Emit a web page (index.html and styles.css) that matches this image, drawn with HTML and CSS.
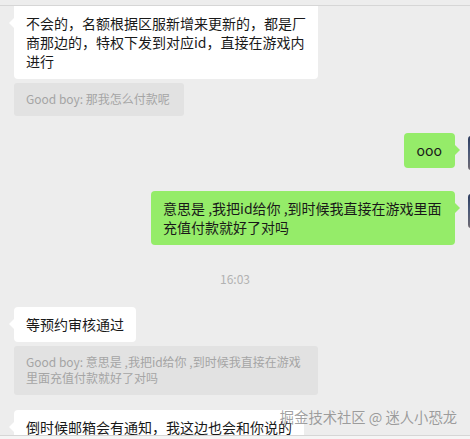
FILE: index.html
```html
<!DOCTYPE html>
<html lang="zh">
<head>
<meta charset="utf-8">
<title>Chat</title>
<link rel="stylesheet" href="styles.css">
</head>
<body>
<div class="app">
  <div class="topbar"></div>
  <div class="chat">
    <div class="row left first">
      <div class="bubble white">不会的，名额根据区服新增来更新的，都是厂商那边的，特权下发到对应id，直接在游戏内进行</div>
    </div>
    <div class="row quote-row">
      <div class="quote">Good boy: 那我怎么付款呢</div>
    </div>
    <div class="row right r1">
      <div class="bubble green">ooo</div>
      <div class="avatar"></div>
    </div>
    <div class="row right r2">
      <div class="bubble green">意思是 ,我把id给你 ,到时候我直接在游戏里面充值付款就好了对吗</div>
      <div class="avatar"></div>
    </div>
    <div class="time">16:03</div>
    <div class="row left after-time">
      <div class="bubble white">等预约审核通过</div>
    </div>
    <div class="row quote-row">
      <div class="quote wide">Good boy: 意思是 ,我把id给你 ,到时候我直接在游戏里面充值付款就好了对吗</div>
    </div>
    <div class="row left last">
      <div class="bubble white">倒时候邮箱会有通知，我这边也会和你说的</div>
    </div>
  </div>
  <div class="inputbar"></div>
  <div class="watermark">掘金技术社区 @ 迷人小恐龙</div>
</div>
</body>
</html>
```
FILE: styles.css
```css
html, body {
  margin: 0;
  padding: 0;
  background: #ededed;
}

.app {
  position: relative;
  width: 470px;
  height: 439px;
  overflow: hidden;
  background: #ededed;
  font-family: "Noto Sans CJK SC", "Microsoft YaHei", sans-serif;
  color: #191919;
}

.topbar {
  height: 5px;
  border-bottom: 1px solid #d6d6d6;
}

.chat {
  height: 429px;
  overflow: hidden;
  display: flex;
  flex-direction: column;
}

.row {
  display: flex;
  align-items: flex-start;
  flex-shrink: 0;
}

.row.left {
  padding-left: 14px;
}

.row.right {
  justify-content: flex-end;
  margin-right: -32px;
}

.row.quote-row {
  padding-left: 14px;
  margin-top: 4px;
}

.row.r1 { margin-top: 17px; }
.row.r2 { margin-top: 21px; }
.row.after-time { margin-top: 20px; }
.row.last { margin-top: 15px; }

.bubble {
  position: relative;
  box-sizing: border-box;
  max-width: 304px;
  padding: 8px 12px;
  font-size: 14px;
  line-height: 19px;
  border-radius: 4px;
  word-break: break-all;
}

.first .bubble {
  border-top-left-radius: 0;
  border-top-right-radius: 0;
}

.bubble.white {
  background: #ffffff;
}

.bubble.white::before {
  content: "";
  position: absolute;
  left: -5px;
  top: 12px;
  border-top: 5px solid transparent;
  border-bottom: 5px solid transparent;
  border-right: 5px solid #ffffff;
}

.bubble.green {
  background: #95ec69;
  margin-right: 13px;
}

.r1 .bubble.green {
  padding: 8px 13px;
}

.bubble.green::after {
  content: "";
  position: absolute;
  right: -5px;
  top: 12px;
  border-top: 5px solid transparent;
  border-bottom: 5px solid transparent;
  border-left: 5px solid #95ec69;
}

.avatar {
  width: 34px;
  height: 34px;
  margin-top: 3px;
  background: linear-gradient(180deg, #2d3c5e 0%, #4a5878 45%, #6f6a72 100%);
  border-radius: 3px;
  flex-shrink: 0;
}

.quote {
  box-sizing: border-box;
  max-width: 304px;
  padding: 8px 14px 9px 12px;
  background: #e2e2e2;
  color: #a5a5a5;
  font-size: 12px;
  line-height: 16px;
  border-radius: 3px;
  word-break: break-all;
}

.quote.wide {
  width: 304px;
  padding-right: 12px;
}

.time {
  margin-top: 25px;
  text-align: center;
  font-size: 12px;
  line-height: 17px;
  color: #b2b2b2;
  flex-shrink: 0;
}

.inputbar {
  height: 3px;
  border-top: 1px solid #d6d6d6;
  background: #f5f5f5;
}

.watermark {
  position: absolute;
  right: 13px;
  top: 407px;
  font-size: 14.3px;
  line-height: 20px;
  color: rgba(120, 120, 120, 0.7);
}
```
